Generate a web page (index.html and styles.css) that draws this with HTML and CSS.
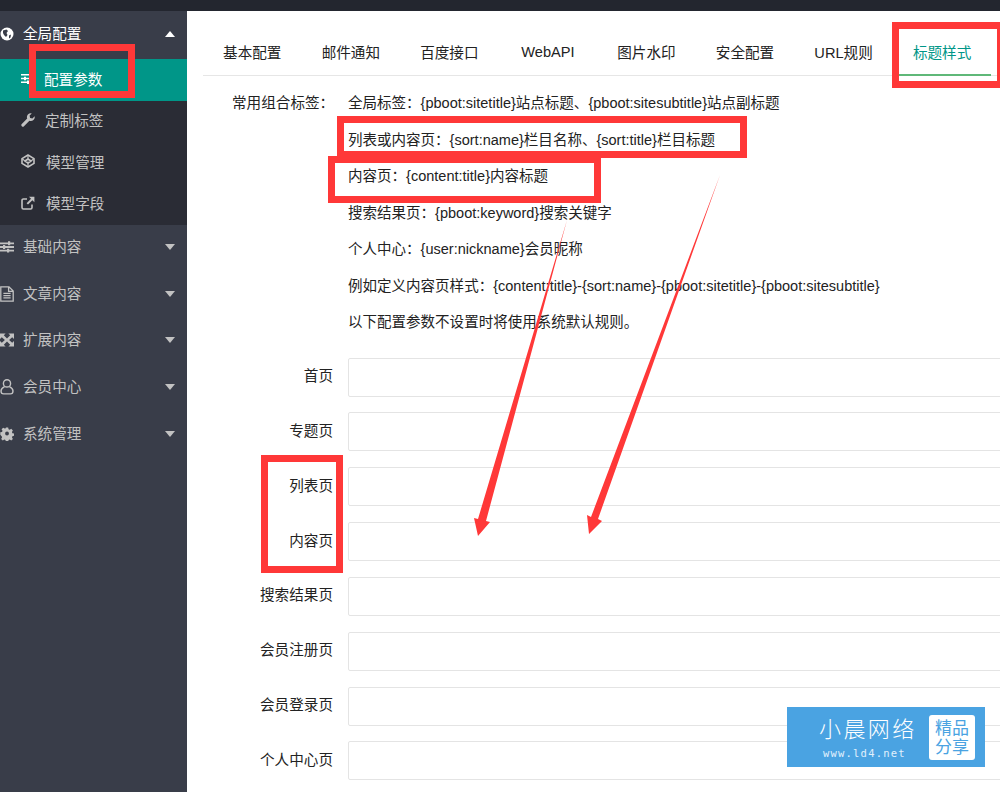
FILE: index.html
```html
<!DOCTYPE html>
<html lang="zh-CN">
<head>
<meta charset="utf-8">
<title>配置参数</title>
<link rel="stylesheet" href="styles.css">
</head>
<body>
<div class="topbar"></div>
<div class="app">
  <aside class="sidebar">
    <div class="nav-item nav-open">
      <svg class="nav-icon" viewBox="0 0 14 14"><circle cx="7" cy="7" r="6.5" fill="#fff"/><path d="M3 3.5 6.5 2.5 8 4 6.5 6 7.5 8 6 10 4 8 3 6ZM9 8.5 11 7.5 10.5 10.5 9 11.5Z" fill="#393d49"/></svg>
      <span class="nav-text">全局配置</span><span class="caret caret-up"></span>
    </div>
    <div class="sub-list">
      <div class="sub-item sub-active">
        <svg class="sub-icon" viewBox="0 0 14 14"><path d="M0 3h14v1.6H0zM0 6.7h14v1.6H0zM0 10.4h14V12H0z" fill="#fff"/><path d="M8 2h2v3.6H8zM3 5.7h2v3.6H3zM6 9.4h2V13H6z" fill="#fff"/></svg>
        <span class="sub-pull">配置参数</span>
      </div>
      <div class="sub-item">
        <svg class="sub-icon" viewBox="0 0 14 14"><path d="M13.6 3.2a3.9 3.9 0 0 1-5.2 4.6L3 13.2a1.4 1.4 0 0 1-2.2-2.2l5.4-5.4A3.9 3.9 0 0 1 10.8.4L8.6 2.6l.5 2.3 2.3.5Z" fill="#c2c2c2"/></svg>
        <span>定制标签</span>
      </div>
      <div class="sub-item">
        <svg class="sub-icon" viewBox="0 0 14 14"><path d="M7 1 13 4.6V9.4L7 13 1 9.4V4.6ZM7 5 4 7l3 2 3-2Z" fill="none" stroke="#c2c2c2" stroke-width="1.6" stroke-linejoin="round"/><path d="M7 1v4M7 9v4M1 4.6 4 7M13 4.6 10 7" stroke="#c2c2c2" stroke-width="1.2"/></svg>
        <span class="sub-shift">模型管理</span>
      </div>
      <div class="sub-item">
        <svg class="sub-icon" viewBox="0 0 14 14"><path d="M6 3H2.4C1.6 3 1 3.6 1 4.4v7.2c0 .8.6 1.4 1.4 1.4h7.2c.8 0 1.4-.6 1.4-1.4V8.5" fill="none" stroke="#c2c2c2" stroke-width="1.6"/><path d="M8 .8h5.4v5.4l-2-2L7 8.6 5.6 7.2 10 2.8Z" fill="#c2c2c2"/></svg>
        <span class="sub-shift">模型字段</span>
      </div>
    </div>
    <div class="nav-item">
      <svg class="nav-icon" viewBox="0 0 14 14"><path d="M0 2.4h14v1.8H0zM0 6.1h14v1.8H0zM0 9.8h14v1.8H0z" fill="#c2c2c2"/><path d="M8 1.3h2.2v3.9H8zM3 5h2.2v3.9H3zM7 8.7h2.2v3.9H7z" fill="#c2c2c2"/></svg>
      <span class="nav-text">基础内容</span><span class="caret"></span>
    </div>
    <div class="nav-item">
      <svg class="nav-icon nav-tall" viewBox="0 0 14 16"><path d="M.8.8h8.2l4.2 4.2v10.2H.8ZM8.6 1v4.4h4.4M3.4 7.4h7.2M3.4 9.6h7.2M3.4 11.8h7.2" fill="none" stroke="#c2c2c2" stroke-width="1.3"/></svg>
      <span class="nav-text">文章内容</span><span class="caret"></span>
    </div>
    <div class="nav-item">
      <svg class="nav-icon" viewBox="0 0 14 14"><path d="M0 .5h5.6L3.8 2.3 7 5.4 10.2 2.3 8.4.5H14v5.6L12.2 4.3 9.1 7 12.2 9.7 14 7.9v5.6H8.4l1.8-1.8L7 8.6 3.8 11.7l1.8 1.8H0V7.9l1.8 1.8L4.9 7 1.8 4.3 0 6.1Z" fill="#c2c2c2"/></svg>
      <span class="nav-text">扩展内容</span><span class="caret"></span>
    </div>
    <div class="nav-item">
      <svg class="nav-icon nav-tall" viewBox="0 0 14 16"><ellipse cx="7" cy="4.4" rx="3.6" ry="3.6" fill="none" stroke="#c2c2c2" stroke-width="1.4"/><path d="M4.6 7.6C2.4 8.6 1 10.4 1 12c0 1.6 1.1 2.9 2.6 2.9h6.8c1.5 0 2.6-1.3 2.6-2.9 0-1.6-1.4-3.4-3.6-4.4" fill="none" stroke="#c2c2c2" stroke-width="1.4"/></svg>
      <span class="nav-text">会员中心</span><span class="caret"></span>
    </div>
    <div class="nav-item">
      <svg class="nav-icon" viewBox="0 0 14 14"><path fill-rule="evenodd" d="M5.8.8h2.4l.4 1.8 1.2.5 1.6-1 1.7 1.7-1 1.6.5 1.2 1.8.4v2.4l-1.8.4-.5 1.2 1 1.6-1.7 1.7-1.6-1-1.2.5-.4 1.8H5.8l-.4-1.8-1.2-.5-1.6 1-1.7-1.7 1-1.6-.5-1.2L0 8.2V5.8l1.8-.4.5-1.2-1-1.6L3 .9l1.6 1 1.2-.5ZM7 5a2 2 0 1 0 0 4 2 2 0 0 0 0-4Z" fill="#c2c2c2" transform="translate(.3 -.2) scale(.96)"/></svg>
      <span class="nav-text">系统管理</span><span class="caret"></span>
    </div>
  </aside>

  <main class="main">
    <nav class="tabs">
      <span class="tab">基本配置</span>
      <span class="tab">邮件通知</span>
      <span class="tab">百度接口</span>
      <span class="tab">WebAPI</span>
      <span class="tab">图片水印</span>
      <span class="tab">安全配置</span>
      <span class="tab">URL规则</span>
      <span class="tab tab-active">标题样式</span>
    </nav>

    <section class="tips">
      <div class="tips-label">常用组合标签：</div>
      <div class="tips-lines">
        <p>全局标签：{pboot:sitetitle}站点标题、{pboot:sitesubtitle}站点副标题</p>
        <p>列表或内容页：{sort:name}栏目名称、{sort:title}栏目标题</p>
        <p>内容页：{content:title}内容标题</p>
        <p>搜索结果页：{pboot:keyword}搜索关键字</p>
        <p>个人中心：{user:nickname}会员昵称</p>
        <p>例如定义内容页样式：{content:title}-{sort:name}-{pboot:sitetitle}-{pboot:sitesubtitle}</p>
        <p>以下配置参数不设置时将使用系统默认规则。</p>
      </div>
    </section>

    <form class="fields">
      <div class="field"><label>首页</label><div class="input"></div></div>
      <div class="field"><label>专题页</label><div class="input"></div></div>
      <div class="field"><label>列表页</label><div class="input"></div></div>
      <div class="field"><label>内容页</label><div class="input"></div></div>
      <div class="field"><label>搜索结果页</label><div class="input"></div></div>
      <div class="field"><label>会员注册页</label><div class="input"></div></div>
      <div class="field"><label>会员登录页</label><div class="input"></div></div>
      <div class="field"><label>个人中心页</label><div class="input"></div></div>
    </form>
  </main>
</div>

<div class="mark mark-menu"></div>
<div class="mark mark-tab"></div>
<div class="mark mark-list"></div>
<div class="mark mark-content"></div>
<div class="mark mark-labels"></div>

<svg class="arrows" viewBox="0 0 1000 792">
  <polygon points="567,220 486,521 490,522 478,536 474,518 478,519"/>
  <polygon points="720,175 598,519 602,521 589,534 587,515 591,517"/>
</svg>

<div class="badge">
  <div class="badge-brand">
    <div class="badge-title">小晨网络</div>
    <div class="badge-url">www.ld4.net</div>
  </div>
  <div class="badge-tag">精品<br>分享</div>
</div>
</body>
</html>
```
FILE: styles.css
```css
* { box-sizing: border-box; }
html, body { margin: 0; padding: 0; }
body {
  width: 1000px;
  height: 792px;
  overflow: hidden;
  position: relative;
  background: #fff;
  color: #222;
  font-family: "Liberation Sans", "Noto Sans CJK SC", sans-serif;
  font-size: 14.6px;
}
.topbar { height: 11px; background: #23262f; }
.app { display: flex; height: 781px; }

/* sidebar */
.sidebar { width: 187px; flex: none; background: #393d49; color: #c2c2c2; }
.nav-item {
  height: 46.7px;
  display: flex;
  align-items: center;
  padding-bottom: 3px;
}
.nav-open { height: 48px; color: #fff; padding-bottom: 3px; }
.nav-icon { width: 14px; height: 14px; flex: none; }
.nav-tall { height: 16px; }
.nav-text { margin-left: 9px; width: 142px; padding-bottom: 3px; }
.caret {
  width: 0;
  height: 0;
  border-left: 5.5px solid transparent;
  border-right: 5.5px solid transparent;
  border-top: 6px solid #c2c2c2;
}
.caret-up { border-top: 0; border-bottom: 6px solid #fff; }
.sub-list { background: #2a2c35; }
.sub-item {
  height: 41.5px;
  display: flex;
  align-items: center;
  padding-left: 21px;
  padding-bottom: 3px;
  gap: 10px;
}
.sub-active { background: #009688; color: #fff; }
.sub-icon { width: 14px; height: 14px; flex: none; }
.sub-shift { margin-left: 1px; }
.sub-pull { margin-left: -1px; }

/* tabs */
.main { flex: 1; min-width: 0; padding-left: 16px; overflow: hidden; }
.tabs {
  height: 65px;
  display: grid;
  grid-template-columns: repeat(8, 98.55px);
  border-bottom: 1px solid #e6e6e6;
  color: #222;
}
.tab { display: flex; align-items: center; justify-content: center; padding-top: 17px; position: relative; }
.tab-active { color: #009688; }
.tab-active::after {
  content: "";
  position: absolute;
  left: 6px;
  width: 92px;
  bottom: -1px;
  height: 2px;
  background: #5fb878;
}

/* tips */
.tips { display: flex; padding-top: 9px; }
.tips-label { width: 145px; flex: none; padding-left: 29px; line-height: 36.5px; white-space: nowrap; }
.tips-lines { flex: 1; white-space: nowrap; font-size: 14.53px; }
.tips-lines p { margin: 0; height: 36.5px; line-height: 36.5px; }

/* form */
.fields { margin-top: 17px; display: flex; flex-direction: column; gap: 15.85px; }
.field { display: flex; align-items: center; height: 39px; }
.field label { width: 130px; flex: none; text-align: right; padding-bottom: 5px; }
.input {
  margin-left: 15px;
  width: 700px;
  height: 39px;
  flex: none;
  border: 1px solid #e4e4e4;
  border-radius: 2px;
  background: #fff;
}

/* annotations */
.mark { position: absolute; border: 7px solid #ff3838; }
.mark-menu { left: 29px; top: 44px; width: 106px; height: 54px; }
.mark-tab { left: 892px; top: 22px; width: 112px; height: 66px; }
.mark-list { left: 337px; top: 116px; width: 410px; height: 42px; }
.mark-content { left: 328px; top: 156px; width: 273px; height: 47px; }
.mark-labels { left: 261px; top: 455px; width: 82px; height: 118px; }
.arrows { position: absolute; left: 0; top: 0; width: 1000px; height: 792px; fill: #ff3838; }

/* watermark */
.badge {
  position: absolute;
  left: 787px;
  top: 707px;
  width: 198px;
  height: 60px;
  background: #4aa3e2;
  color: #fff;
  display: flex;
  align-items: center;
}
.badge-brand { margin-left: 32px; width: 110px; padding-top: 2px; }
.badge-title { font-size: 22px; line-height: 28px; letter-spacing: 2.4px; font-weight: 300; white-space: nowrap; }
.badge-url { font-family: "DejaVu Sans Mono", monospace; font-size: 10.5px; line-height: 14px; letter-spacing: 1.2px; white-space: nowrap; margin-top: 2px; margin-left: 4px; color: #e0f0fc; }
.badge-tag {
  width: 46px;
  height: 45px;
  background: #fff;
  border-radius: 3px;
  color: #4aa3e2;
  font-size: 17px;
  line-height: 19px;
  text-align: center;
  padding-top: 4px;
}
```
